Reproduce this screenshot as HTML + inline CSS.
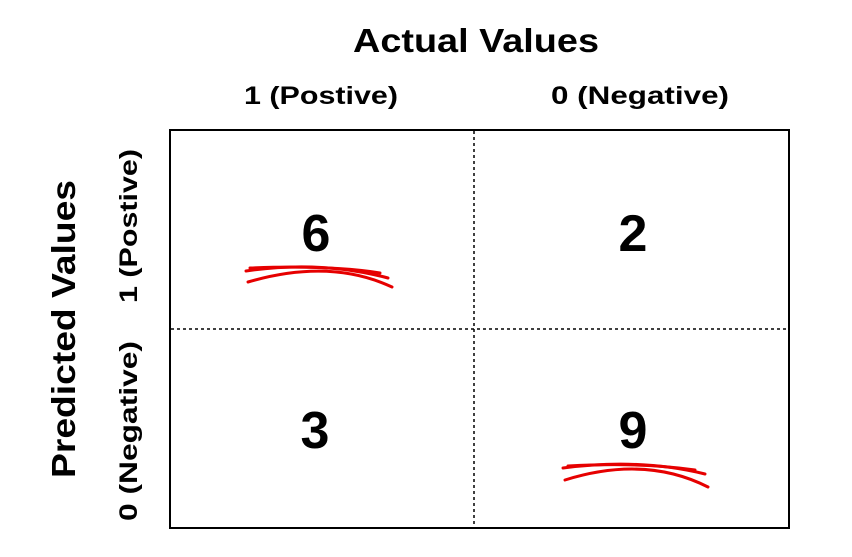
<!DOCTYPE html>
<html><head><style>html,body{margin:0;padding:0;background:#fff}</style></head>
<body>
<svg width="852" height="552" viewBox="0 0 852 552" xmlns="http://www.w3.org/2000/svg" font-family="Liberation Sans, DejaVu Sans, sans-serif">
<rect x="0" y="0" width="852" height="552" fill="#fff"/>
<text x="476" y="52" font-size="33" font-weight="bold" text-anchor="middle" textLength="246" lengthAdjust="spacingAndGlyphs">Actual Values</text>
<text x="321" y="104" font-size="25" font-weight="bold" text-anchor="middle" textLength="154" lengthAdjust="spacingAndGlyphs">1 (Postive)</text>
<text x="640" y="104" font-size="25" font-weight="bold" text-anchor="middle" textLength="178" lengthAdjust="spacingAndGlyphs">0 (Negative)</text>
<text transform="translate(75,329) rotate(-90)" font-size="33" font-weight="bold" text-anchor="middle" textLength="298" lengthAdjust="spacingAndGlyphs">Predicted Values</text>
<text transform="translate(137,226) rotate(-90)" font-size="25" font-weight="bold" text-anchor="middle" textLength="154" lengthAdjust="spacingAndGlyphs">1 (Postive)</text>
<text transform="translate(137,431) rotate(-90)" font-size="25" font-weight="bold" text-anchor="middle" textLength="180" lengthAdjust="spacingAndGlyphs">0 (Negative)</text>
<rect x="170" y="130" width="619" height="398" fill="none" stroke="#000" stroke-width="2"/>
<line x1="474" y1="131" x2="474" y2="527" stroke="#000" stroke-width="1.5" stroke-dasharray="3,3"/>
<line x1="171" y1="329" x2="788" y2="329" stroke="#000" stroke-width="1.5" stroke-dasharray="3,3"/>
<g font-size="52" font-weight="bold" text-anchor="middle">
<text x="316" y="251">6</text>
<text x="633" y="251">2</text>
<text x="315" y="448">3</text>
<text x="633" y="448">9</text>
</g>
<g fill="none" stroke="#e60000" stroke-width="3" stroke-linecap="round">
<path d="M246 271 Q320 260 388 278"/>
<path d="M248 282 Q330 258 392 287"/>
<path d="M250 268 Q330 265 380 273"/>
<path d="M563 468 Q640 458 705 474"/>
<path d="M565 480 Q645 455 708 487"/>
<path d="M568 466 Q640 462 695 470"/>
</g>
</svg>
</body></html>
